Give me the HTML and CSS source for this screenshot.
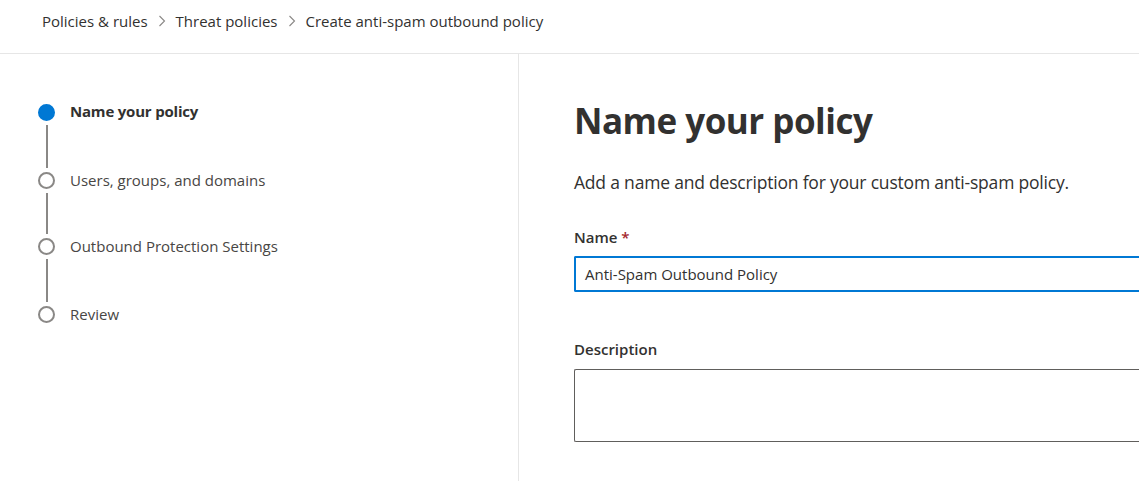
FILE: index.html
```html
<!DOCTYPE html>
<html lang="en">
<head>
<meta charset="utf-8">
<title>Create anti-spam outbound policy</title>
<link rel="stylesheet" href="styles.css">
</head>
<body>
<header class="topbar">
  <nav class="breadcrumb">
    <span class="crumb">Policies &amp; rules</span>
    <svg class="chev" width="8" height="12" viewBox="0 0 8 12"><path d="M1.5 1 L6.5 6 L1.5 11" fill="none" stroke="#8a8886" stroke-width="1.1"/></svg>
    <span class="crumb">Threat policies</span>
    <svg class="chev" width="8" height="12" viewBox="0 0 8 12"><path d="M1.5 1 L6.5 6 L1.5 11" fill="none" stroke="#8a8886" stroke-width="1.1"/></svg>
    <span class="crumb current">Create anti-spam outbound policy</span>
  </nav>
</header>
<main class="wizard">
  <aside class="steps">
    <div class="step active s1">
      <div class="track"><span class="dot"></span><span class="line"></span></div>
      <span class="label">Name your policy</span>
    </div>
    <div class="step s2">
      <div class="track"><span class="dot"></span><span class="line"></span></div>
      <span class="label">Users, groups, and domains</span>
    </div>
    <div class="step s3">
      <div class="track"><span class="dot"></span><span class="line"></span></div>
      <span class="label">Outbound Protection Settings</span>
    </div>
    <div class="step last">
      <div class="track"><span class="dot"></span></div>
      <span class="label">Review</span>
    </div>
  </aside>
  <section class="content">
    <h1 class="title">Name your policy</h1>
    <p class="intro">Add a name and description for your custom anti-spam policy.</p>
    <div class="field">
      <label class="field-label">Name <span class="req">*</span></label>
      <div class="input focused">Anti-Spam Outbound Policy</div>
    </div>
    <div class="field desc">
      <label class="field-label">Description</label>
      <div class="textarea"></div>
    </div>
  </section>
</main>
</body>
</html>
```
FILE: styles.css
```css
html, body {
  margin: 0;
  padding: 0;
  background: #ffffff;
  color: #323130;
  font-family: "Open Sans", "Noto Sans", "Liberation Sans", sans-serif;
  overflow: hidden;
}
.topbar {
  height: 53px;
  border-bottom: 1px solid #e6e6e6;
  box-sizing: content-box;
}
.breadcrumb {
  display: flex;
  align-items: center;
  padding: 10px 0 0 42px;
  height: 22px;
  font-size: 15px;
  letter-spacing: 0;
}
.crumb { color: #323130; }
.chev { margin: 0 10px 0 10px; }
.wizard {
  display: flex;
  height: 427px;
}
.steps {
  width: 519px;
  border-right: 1px solid #e6e6e6;
  padding: 50px 0 0 38px;
  box-sizing: border-box;
  flex: none;
}
.step {
  display: flex;
  align-items: flex-start;
  height: 68px;
}
.step.s2 { height: 66px; }
.step.last { height: auto; }
.track {
  width: 17px;
  height: 100%;
  display: flex;
  flex-direction: column;
  align-items: center;
}
.dot {
  width: 17px;
  height: 17px;
  border-radius: 50%;
  box-sizing: border-box;
  border: 2px solid #8a8886;
  flex: none;
}
.step.active .dot {
  background: #0078d4;
  border-color: #0078d4;
}
.line {
  width: 2px;
  flex: 1;
  background: #8a8886;
  margin: 4px 0 4px;
}
.label {
  margin-left: 15px;
  font-size: 15px;
  line-height: 17px;
  color: #484644;
  letter-spacing: 0;
}
.step.active .label {
  font-weight: 700;
  color: #323130;
  letter-spacing: -0.2px;
  line-height: 15px;
}
.content {
  flex: 1;
  padding: 45px 0 0 55px;
  min-width: 0;
}
.title {
  margin: 0;
  font-size: 35px;
  line-height: 44px;
  font-weight: 700;
  letter-spacing: -0.5px;
}
.intro {
  margin: 27px 0 0;
  font-size: 17.5px;
  line-height: 24px;
  letter-spacing: -0.2px;
}
.field { margin-top: 33px; }
.field-label {
  display: block;
  font-size: 15px;
  line-height: 20px;
  font-weight: 600;
  letter-spacing: 0;
}
.req { color: #a4262c; }
.input {
  margin-top: 9px;
  height: 36px;
  box-sizing: border-box;
  border: 2px solid #0078d4;
  border-right: none;
  border-radius: 2px 0 0 2px;
  padding: 0 9px;
  display: flex;
  align-items: center;
  font-size: 15px;
  letter-spacing: 0;
}
.field.desc { margin-top: 47px; }
.textarea {
  margin-top: 10px;
  height: 73px;
  box-sizing: border-box;
  border: 1px solid #605e5c;
  border-right: none;
  border-radius: 2px 0 0 2px;
}
```
